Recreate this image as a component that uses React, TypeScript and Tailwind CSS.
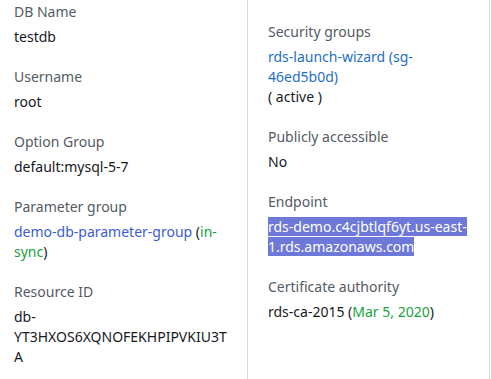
import type { ReactNode } from "react";

const font = { fontFamily: '"Noto Sans", "Open Sans", sans-serif' };

function Field({ label, children }: { label: string; children: ReactNode }) {
  return (
    <div className="mb-5">
      <div className="text-[14px] leading-5 text-[#545b64] mb-[5px]">{label}</div>
      <div className="text-[14px] leading-5 text-[#16191f] break-words">{children}</div>
    </div>
  );
}

export default function App() {
  return (
    <div className="h-[379px] w-[491px] overflow-hidden bg-white" style={font}>
      <div className="flex h-full">
        {/* left column */}
        <div className="w-[248px] shrink-0 border-r border-[#d5dbdb] pt-[2px] pl-[14px] pr-[17px]">
          <Field label="DB Name">testdb</Field>
          <Field label="Username">root</Field>
          <Field label="Option Group">default:mysql-5-7</Field>
          <Field label="Parameter group">
            <span className="text-[#3c5bd4]">demo-db-parameter-group</span> (
            <span className="text-[#1aa13c]">in-sync</span>)
          </Field>
          <Field label="Resource ID">db-YT3HXOS6XQNOFEKHPIPVKIU3TA</Field>
        </div>

        {/* right column */}
        <div className="w-[242px] shrink-0 border-r border-[#d5dbdb] pt-[22px] pl-[20px] pr-[14px]">
          <Field label="Security groups">
            <span className="text-[#1f70c4]">rds-launch-wizard (sg-46ed5b0d)</span>
            <div>( active )</div>
          </Field>
          <Field label="Publicly accessible">No</Field>
          <Field label="Endpoint">
            <span className="bg-[#6d78d8] text-white">
              rds-demo.c4cjbtlqf6yt.us-east-1.rds.amazonaws.com
            </span>
          </Field>
          <Field label="Certificate authority">
            rds-ca-2015 (<span className="text-[#1aa13c]">Mar 5, 2020</span>)
          </Field>
        </div>
      </div>
    </div>
  );
}
